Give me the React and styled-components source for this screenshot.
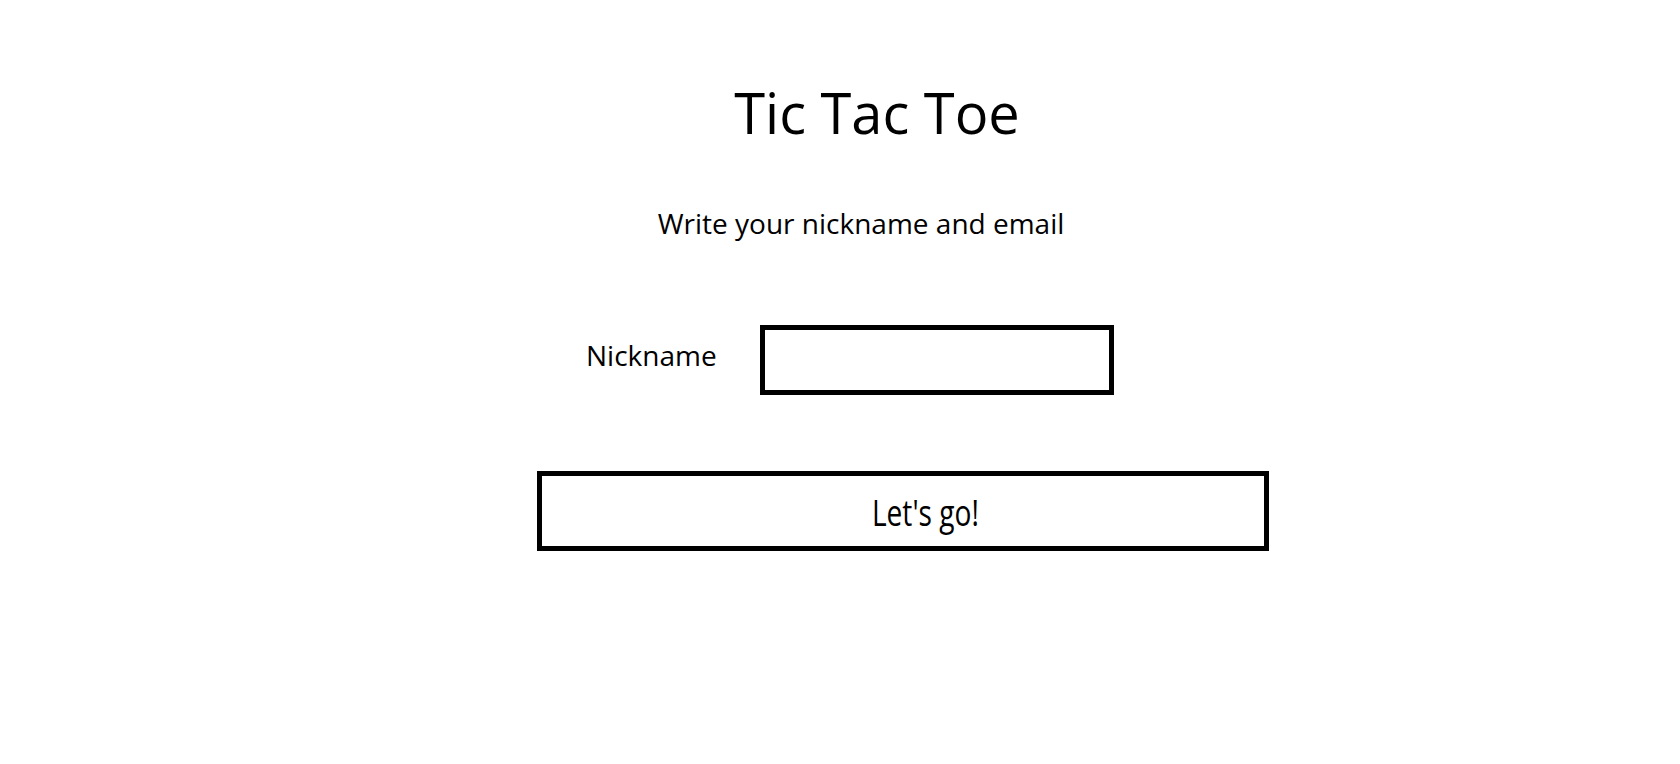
import React from "react";
import styled, { createGlobalStyle } from "styled-components";

const Global = createGlobalStyle`
  html, body { margin: 0; padding: 0; background: #ffffff; }
  body { font-family: "Open Sans", Lato, sans-serif; color: #000; }
`;

const Page = styled.main`
  display: flex;
  flex-direction: column;
  align-items: flex-start;
  padding: 79px 0 0 537px;
  box-sizing: border-box;
  min-height: 764px;
`;

const Title = styled.h1`
  margin: 0;
  width: 680px;
  text-align: center;
  font-size: 56px;
  font-weight: 400;
  line-height: 1.2;
`;

const Subtitle = styled.p`
  margin: 61px 0 0;
  width: 648px;
  text-align: center;
  font-size: 28px;
  line-height: 1.2;
`;

const Row = styled.div`
  display: flex;
  align-items: center;
  margin-top: 84px;
  padding-left: 49px;
`;

const Label = styled.label`
  width: 174px;
  font-size: 28px;
  line-height: 1.2;
  margin-bottom: 8px;
`;

const Input = styled.input`
  box-sizing: border-box;
  width: 354px;
  height: 70px;
  border: 5px solid #000;
  border-radius: 0;
  outline: none;
  background: #fff;
  font-family: inherit;
  font-size: 28px;
  padding: 0 10px;
`;

const Button = styled.button`
  box-sizing: border-box;
  margin-top: 76px;
  width: 732px;
  height: 80px;
  border: 5px solid #000;
  border-radius: 0;
  background: #fff;
  display: flex;
  align-items: center;
  justify-content: center;
  padding: 2px 0 0 44px;
  cursor: pointer;
`;

const ButtonText = styled.span`
  display: inline-block;
  font-family: "Open Sans", Lato, sans-serif;
  font-size: 37px;
  line-height: 1.2;
  color: #000;
  transform: scaleX(0.76);
`;

export default function App() {
  return (
    <>
      <Global />
      <Page>
        <Title>Tic Tac Toe</Title>
        <Subtitle>Write your nickname and email</Subtitle>
        <Row>
          <Label htmlFor="nick">Nickname</Label>
          <Input id="nick" type="text" />
        </Row>
        <Button type="button">
          <ButtonText>Let's go!</ButtonText>
        </Button>
      </Page>
    </>
  );
}
